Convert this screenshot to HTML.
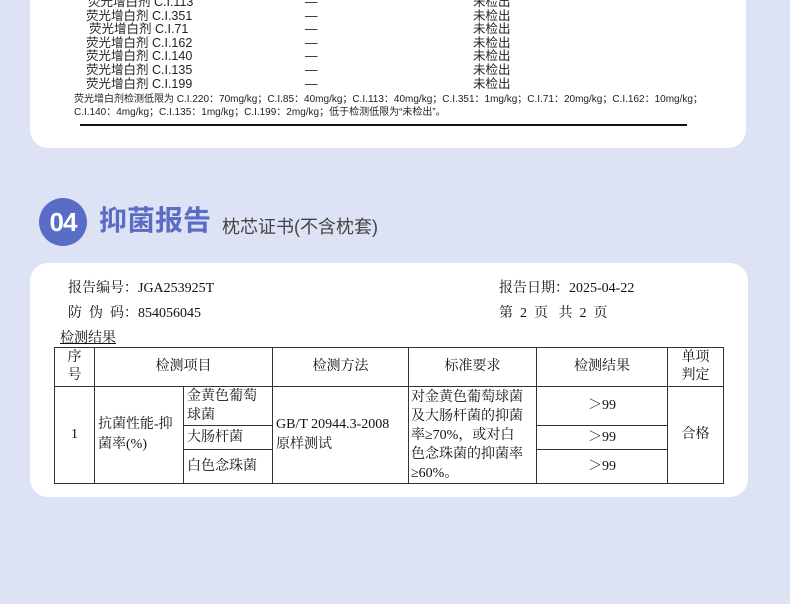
<!DOCTYPE html>
<html><head><meta charset="utf-8"><style>
body{margin:0;width:790px;height:604px;background:#dde3f5;position:relative;overflow:hidden;font-family:"Liberation Serif","Noto Serif CJK SC",serif;color:#111}
.card{position:absolute;background:#fff;border-radius:18px}
.a{position:absolute;white-space:nowrap}
.r{position:absolute;font-size:12.5px;line-height:13px;font-family:"Liberation Sans","Noto Sans CJK SC",sans-serif;color:#222}
table{position:absolute;left:54px;top:347px;border-collapse:collapse;font-size:14px;table-layout:fixed;width:669px}
td{border:1.5px solid #333;padding:0 3px;line-height:20px;vertical-align:middle;overflow:hidden}
.c{text-align:center}
</style></head><body>
<div class="card" style="left:30px;top:-20px;width:716px;height:168px"></div>
<div class="r" style="left:88px;top:-4px">荧光增白剂 C.I.113</div><div class="r" style="left:305px;top:-4px">—</div><div class="r" style="left:473px;top:-4px">未检出</div>
<div class="r" style="left:86px;top:10px">荧光增白剂 C.I.351</div><div class="r" style="left:305px;top:10px">—</div><div class="r" style="left:473px;top:10px">未检出</div>
<div class="r" style="left:89px;top:23px">荧光增白剂 C.I.71</div><div class="r" style="left:305px;top:23px">—</div><div class="r" style="left:473px;top:23px">未检出</div>
<div class="r" style="left:86px;top:37px">荧光增白剂 C.I.162</div><div class="r" style="left:305px;top:37px">—</div><div class="r" style="left:473px;top:37px">未检出</div>
<div class="r" style="left:86px;top:50px">荧光增白剂 C.I.140</div><div class="r" style="left:305px;top:50px">—</div><div class="r" style="left:473px;top:50px">未检出</div>
<div class="r" style="left:86px;top:64px">荧光增白剂 C.I.135</div><div class="r" style="left:305px;top:64px">—</div><div class="r" style="left:473px;top:64px">未检出</div>
<div class="r" style="left:86px;top:78px">荧光增白剂 C.I.199</div><div class="r" style="left:305px;top:78px">—</div><div class="r" style="left:473px;top:78px">未检出</div>
<div class="r" style="left:74px;top:93px;font-size:10px">荧光增白剂检测低限为 C.I.220：70mg/kg；C.I.85：40mg/kg；C.I.113：40mg/kg；C.I.351：1mg/kg；C.I.71：20mg/kg；C.I.162：10mg/kg；</div>
<div class="r" style="left:74px;top:106px;font-size:10px">C.I.140：4mg/kg；C.I.135：1mg/kg；C.I.199：2mg/kg；低于检测低限为“未检出”。</div>
<div class="a" style="left:80px;top:124px;width:607px;height:2px;background:#111"></div>

<div class="a" style="left:39px;top:198px;width:48px;height:48px;border-radius:50%;background:#5a6dc6;color:#fff;font:bold 26px/48px 'Liberation Sans',sans-serif;text-align:center;letter-spacing:-1px">04</div>
<div class="a" style="left:99px;top:203px;font:bold 28px/36px 'Liberation Sans','Noto Sans CJK SC',sans-serif;color:#5a6cc5">抑菌报告</div>
<div class="a" style="left:222px;top:214px;font:18px/26px 'Liberation Sans','Noto Sans CJK SC',sans-serif;color:#444">枕芯证书(不含枕套)</div>

<div class="card" style="left:30px;top:263px;width:718px;height:234px"></div>
<div class="a" style="left:68px;top:277px;font-size:14px">报告编号：JGA253925T</div>
<div class="a" style="left:68px;top:302px;font-size:14px">防&nbsp;&nbsp;伪&nbsp;&nbsp;码：854056045</div>
<div class="a" style="left:499px;top:277px;font-size:14px">报告日期：2025-04-22</div>
<div class="a" style="left:499px;top:302px;font-size:14px">第&nbsp;&nbsp;2&nbsp;&nbsp;页&nbsp;&nbsp;&nbsp;共&nbsp;&nbsp;2&nbsp;&nbsp;页</div>
<div class="a" style="left:60px;top:327px;font-size:14px;text-decoration:underline">检测结果</div>
<table>
<colgroup><col style="width:40px"><col style="width:89px"><col style="width:89px"><col style="width:136px"><col style="width:128px"><col style="width:131px"><col style="width:56px"></colgroup>
<tr style="height:39px"><td class="c" style="line-height:18px">序<br>号</td><td class="c" colspan="2">检测项目</td><td class="c">检测方法</td><td class="c">标准要求</td><td class="c">检测结果</td><td class="c" style="line-height:18px">单项<br>判定</td></tr>
<tr style="height:39px"><td class="c" rowspan="3">1</td><td rowspan="3">抗菌性能-抑菌率(%)</td><td style="line-height:19px">金黄色葡萄球菌</td><td rowspan="3">GB/T 20944.3-2008<br>原样测试</td><td rowspan="3" style="line-height:19px;padding:0 2px;font-size:14px;white-space:nowrap">对金黄色葡萄球菌<br>及大肠杆菌的抑菌<br>率≥70%，或对白<br>色念珠菌的抑菌率<br>≥60%。</td><td class="c">＞99</td><td class="c" rowspan="3">合格</td></tr>
<tr style="height:24px"><td>大肠杆菌</td><td class="c">＞99</td></tr>
<tr style="height:34px"><td>白色念珠菌</td><td class="c">＞99</td></tr>
</table>
</body></html>
